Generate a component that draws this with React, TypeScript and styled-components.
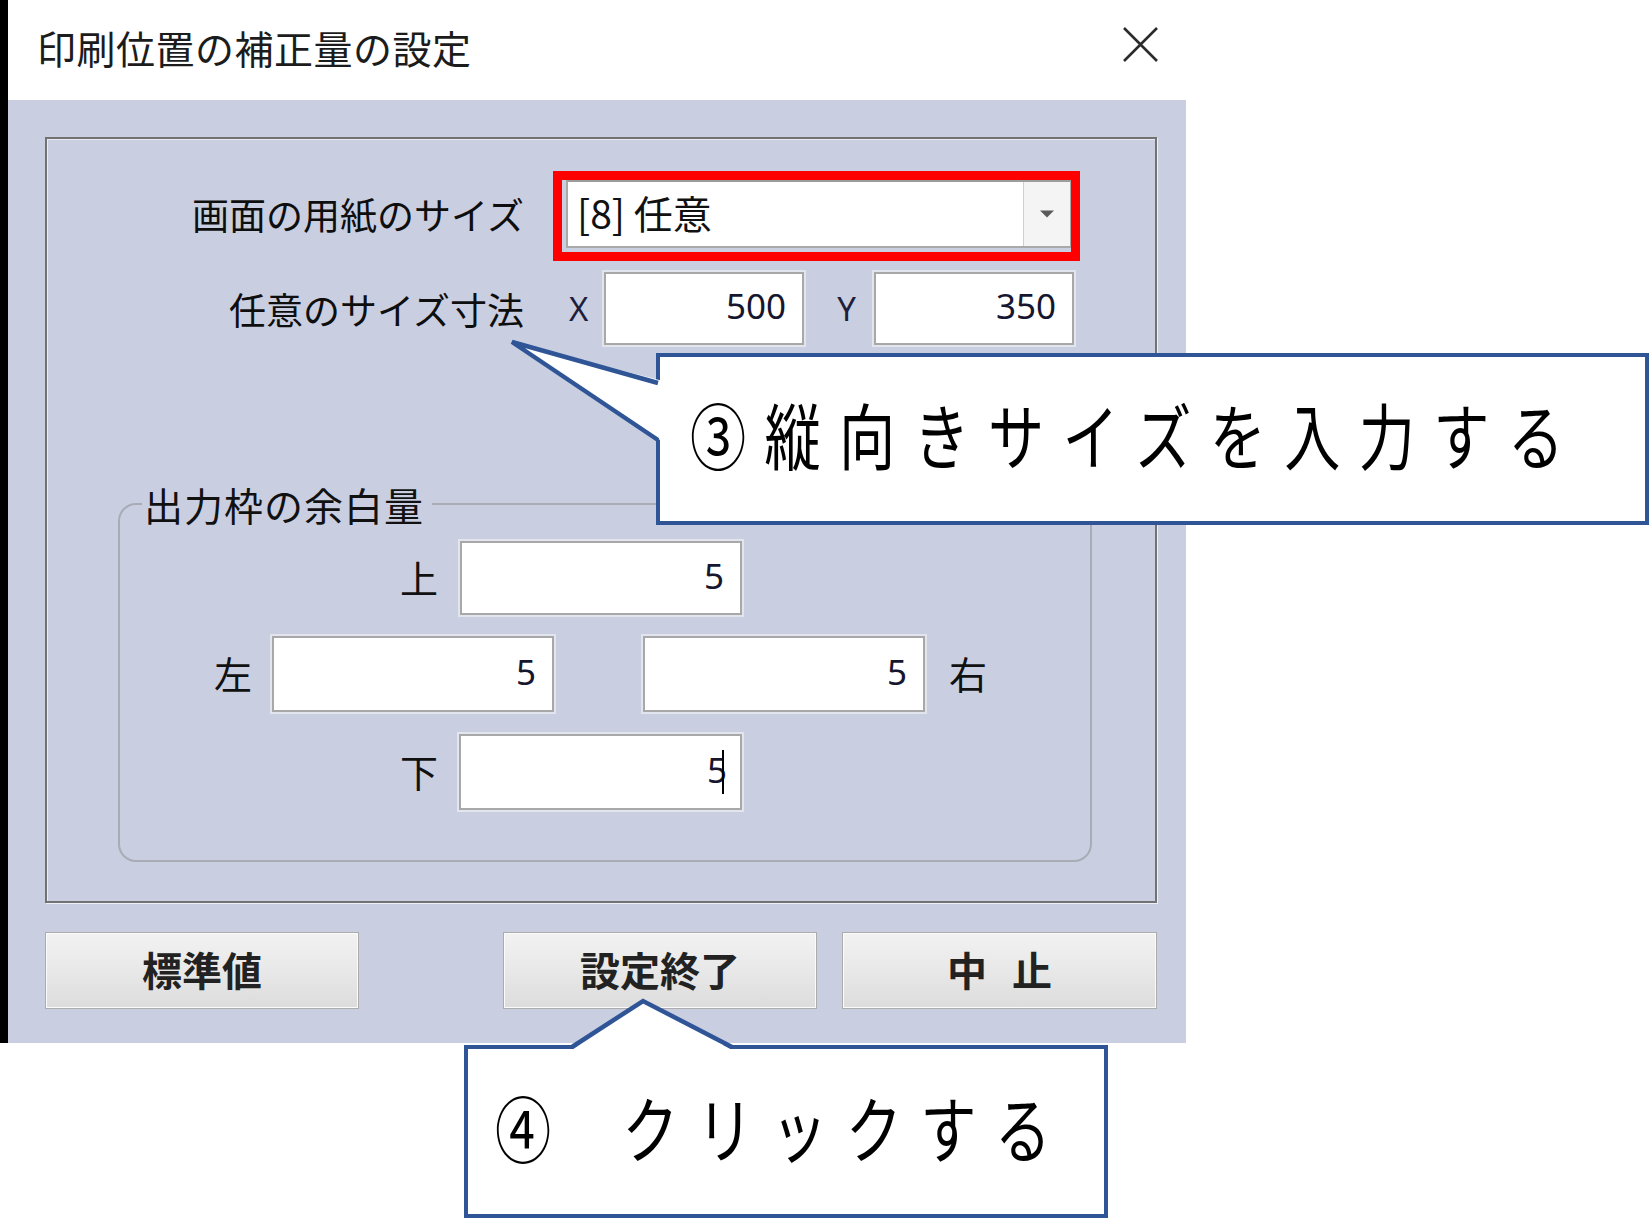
import styled, { createGlobalStyle } from "styled-components";

const GlobalStyle = createGlobalStyle`
  html, body {
    margin: 0;
    padding: 0;
    background: #fff;
  }
  body {
    font-family: "Noto Sans CJK JP", "Noto Sans", sans-serif;
  }
`;

const Page = styled.div`
  position: relative;
  width: 1652px;
  height: 1220px;
  overflow: hidden;
  background: #fff;
`;

const Dialog = styled.div`
  width: 1186px;
  height: 1043px;
  border-left: 8px solid #000;
  box-sizing: border-box;
  display: flex;
  flex-direction: column;
`;

const TitleBar = styled.div`
  height: 100px;
  flex: none;
  display: flex;
  align-items: center;
  justify-content: space-between;
  padding: 0 27px 0 29px;
  box-sizing: border-box;
  background: #fff;
`;

const Title = styled.span`
  font-size: 39px;
  color: #1c1c1c;
  letter-spacing: 0.5px;
  margin-bottom: 6px;
`;

const CloseIcon = styled.svg`
  width: 37px;
  height: 37px;
  margin-bottom: 12px;
`;

const Body = styled.div`
  flex: 1;
  background: #c9cfe1;
  padding: 37px 29px 0 37px;
  box-sizing: border-box;
`;

const Frame = styled.div`
  height: 766px;
  box-sizing: border-box;
  border: 2px solid #727272;
  box-shadow: inset 1px 1px 0 #e9ecf5, 1px 1px 0 #eef0f8;
  padding-top: 41px;
`;

const FieldRow = styled.div<{ $top?: number; $h: number }>`
  display: flex;
  align-items: center;
  height: ${(p) => p.$h}px;
  margin-top: ${(p) => p.$top ?? 0}px;
`;

const FieldLabel = styled.div`
  width: 477px;
  text-align: right;
  font-size: 37px;
  color: #0e0e0e;
  white-space: nowrap;
`;

const ComboBox = styled.div`
  width: 506px;
  height: 68px;
  margin-left: 42px;
  display: flex;
  box-sizing: border-box;
  border: 2px solid #a9a9a9;
  border-top-color: #9c9c9c;
  background: #fff;
`;

const ComboValue = styled.div`
  flex: 1;
  display: flex;
  align-items: center;
  padding: 0 0 4px 9px;
  font-size: 39px;
  color: #111;
`;

const ComboButton = styled.div`
  width: 46px;
  display: flex;
  align-items: center;
  justify-content: center;
  border-left: 1px solid #cfcfcf;
  background: #f4f4f4;
`;

const AxisLabel = styled.span<{ $lead: number; $w: number }>`
  width: ${(p) => p.$w}px;
  margin: 0 17px 0 ${(p) => p.$lead}px;
  font-family: "Noto Sans", "DejaVu Sans", sans-serif;
  font-size: 33px;
  color: #1e1e3c;
  text-align: center;
`;

const TextBox = styled.div<{ $w: number; $h?: number }>`
  width: ${(p) => p.$w}px;
  height: ${(p) => p.$h ?? 76}px;
  box-sizing: border-box;
  display: flex;
  align-items: center;
  justify-content: flex-end;
  padding: 0 16px 6px 0;
  background: #fff;
  border: 2px solid #a8a8a8;
  box-shadow: 0 0 0 2px #e3e5ee;
  font-family: "Noto Sans", "DejaVu Sans", sans-serif;
  font-size: 35px;
  color: #16162e;
`;

const Caret = styled.span`
  display: inline-block;
  width: 2px;
  height: 44px;
  margin-left: -5px;
  margin-top: 6px;
  background: #000;
`;

const Group = styled.fieldset`
  width: 974px;
  height: 380px;
  margin: 137px 0 0 71px;
  padding: 14px 0 0 0;
  box-sizing: border-box;
  border: 2px solid #a9acb6;
  border-radius: 18px;
  min-width: 0;
`;

const Legend = styled.legend`
  margin-left: 22px;
  padding: 0 8px 0 2px;
  font-size: 39px;
  line-height: 44px;
  letter-spacing: 1px;
  color: #111;
`;

const MarginRow = styled.div<{ $indent: number; $top?: number }>`
  display: flex;
  align-items: center;
  height: 76px;
  padding-left: ${(p) => p.$indent}px;
  margin-top: ${(p) => p.$top ?? 0}px;
`;

const SideLabel = styled.span<{ $gap: number }>`
  font-size: 38px;
  color: #111;
  margin-right: ${(p) => p.$gap}px;
  padding-bottom: 4px;
`;

const SideLabelAfter = styled(SideLabel)`
  margin-right: 0;
  margin-left: 24px;
`;

const Spacer = styled.div<{ $w: number }>`
  width: ${(p) => p.$w}px;
  flex: none;
`;

const ButtonRow = styled.div`
  display: flex;
  margin-top: 29px;
`;

const DialogButton = styled.button<{ $push?: boolean; $w?: number }>`
  width: ${(p) => p.$w ?? 314}px;
  height: 77px;
  margin-left: ${(p) => (p.$push ? "auto" : "0")};
  padding: 0 0 4px 0;
  box-sizing: border-box;
  border: 1px solid #acacac;
  background: linear-gradient(#f2f2f2, #e7e7e7 55%, #dcdcdc);
  box-shadow: inset 0 0 0 1px #fbfbfb;
  font-family: "Noto Sans CJK JP", sans-serif;
  font-size: 40px;
  font-weight: 700;
  color: #222;
  white-space: pre;
  word-spacing: 16px;
`;

const CancelButton = styled(DialogButton)`
  margin-left: 25px;
`;

/* annotations laid over the screenshot */

const RedHighlight = styled.div`
  position: absolute;
  left: 553px;
  top: 171px;
  width: 527px;
  height: 90px;
  box-sizing: border-box;
  border: 9px solid #ff0000;
`;

const CalloutBox = styled.div<{ $x: number; $y: number; $w: number; $h: number; $pad: number }>`
  position: absolute;
  left: ${(p) => p.$x}px;
  top: ${(p) => p.$y}px;
  width: ${(p) => p.$w}px;
  height: ${(p) => p.$h}px;
  box-sizing: border-box;
  border: 4px solid #2f5597;
  background: #fff;
  display: flex;
  align-items: center;
  padding: 0 0 12px ${(p) => p.$pad}px;
`;

const CalloutText = styled.span<{ $ws?: number }>`
  display: inline-block;
  font-family: "Noto Sans CJK JP", sans-serif;
  font-size: 72px;
  line-height: 1;
  letter-spacing: 23.5px;
  word-spacing: ${(p) => p.$ws ?? 0}px;
  color: #000;
  white-space: pre;
  transform: scaleX(0.78);
  transform-origin: left center;
`;

const Pointer = styled.svg<{ $x: number; $y: number }>`
  position: absolute;
  left: ${(p) => p.$x}px;
  top: ${(p) => p.$y}px;
  overflow: visible;
`;

export default function App() {
  return (
    <Page>
      <GlobalStyle />
      <Dialog>
        <TitleBar>
          <Title>印刷位置の補正量の設定</Title>
          <CloseIcon viewBox="0 0 37 37">
            <path d="M2 2 L35 35 M35 2 L2 35" stroke="#2b2b2b" strokeWidth="2.6" fill="none" />
          </CloseIcon>
        </TitleBar>
        <Body>
          <Frame>
            <FieldRow $h={68}>
              <FieldLabel>画面の用紙のサイズ</FieldLabel>
              <ComboBox>
                <ComboValue>[8] 任意</ComboValue>
                <ComboButton>
                  <svg width="16" height="8" viewBox="0 0 16 8">
                    <path d="M1 0.5 H15 L8 7.5 Z" fill="#5a5a5a" />
                  </svg>
                </ComboButton>
              </ComboBox>
            </FieldRow>
            <FieldRow $top={24} $h={73}>
              <FieldLabel>任意のサイズ寸法</FieldLabel>
              <AxisLabel $lead={45} $w={18}>X</AxisLabel>
              <TextBox $w={200} $h={73}>500</TextBox>
              <AxisLabel $lead={32} $w={21}>Y</AxisLabel>
              <TextBox $w={200} $h={73}>350</TextBox>
            </FieldRow>
            <Group>
              <Legend>出力枠の余白量</Legend>
              <MarginRow $indent={280}>
                <SideLabel $gap={22}>上</SideLabel>
                <TextBox $w={282} $h={74}>5</TextBox>
              </MarginRow>
              <MarginRow $indent={94} $top={20}>
                <SideLabel $gap={20}>左</SideLabel>
                <TextBox $w={282}>5</TextBox>
                <Spacer $w={89} />
                <TextBox $w={282}>5</TextBox>
                <SideLabelAfter $gap={0}>右</SideLabelAfter>
              </MarginRow>
              <MarginRow $indent={280} $top={22}>
                <SideLabel $gap={21}>下</SideLabel>
                <TextBox $w={283}>
                  5<Caret />
                </TextBox>
              </MarginRow>
            </Group>
          </Frame>
          <ButtonRow>
            <DialogButton>標準値</DialogButton>
            <DialogButton $push>設定終了</DialogButton>
            <CancelButton $w={315}>中 止</CancelButton>
          </ButtonRow>
        </Body>
      </Dialog>

      <RedHighlight />

      <CalloutBox $x={656} $y={353} $w={993} $h={172} $pad={30}>
        <CalloutText>③縦向きサイズを入力する</CalloutText>
      </CalloutBox>
      <Pointer $x={500} $y={330} width="170" height="120" viewBox="0 0 170 120">
        <polygon points="12,12 163,51 163,112" fill="#fff" />
        <path d="M158 53 L12 12 L158 110" stroke="#2f5597" strokeWidth="4.5" fill="none" strokeLinejoin="miter" />
      </Pointer>

      <CalloutBox $x={464} $y={1045} $w={644} $h={173} $pad={27}>
        <CalloutText $ws={28}>④ クリックする</CalloutText>
      </CalloutBox>
      <Pointer $x={560} $y={990} width="190" height="70" viewBox="0 0 190 70">
        <polygon points="83,11 10,61 174,61" fill="#fff" />
        <path d="M12 57 L83 11 L172 57" stroke="#2f5597" strokeWidth="4.5" fill="none" strokeLinejoin="miter" />
      </Pointer>
    </Page>
  );
}
